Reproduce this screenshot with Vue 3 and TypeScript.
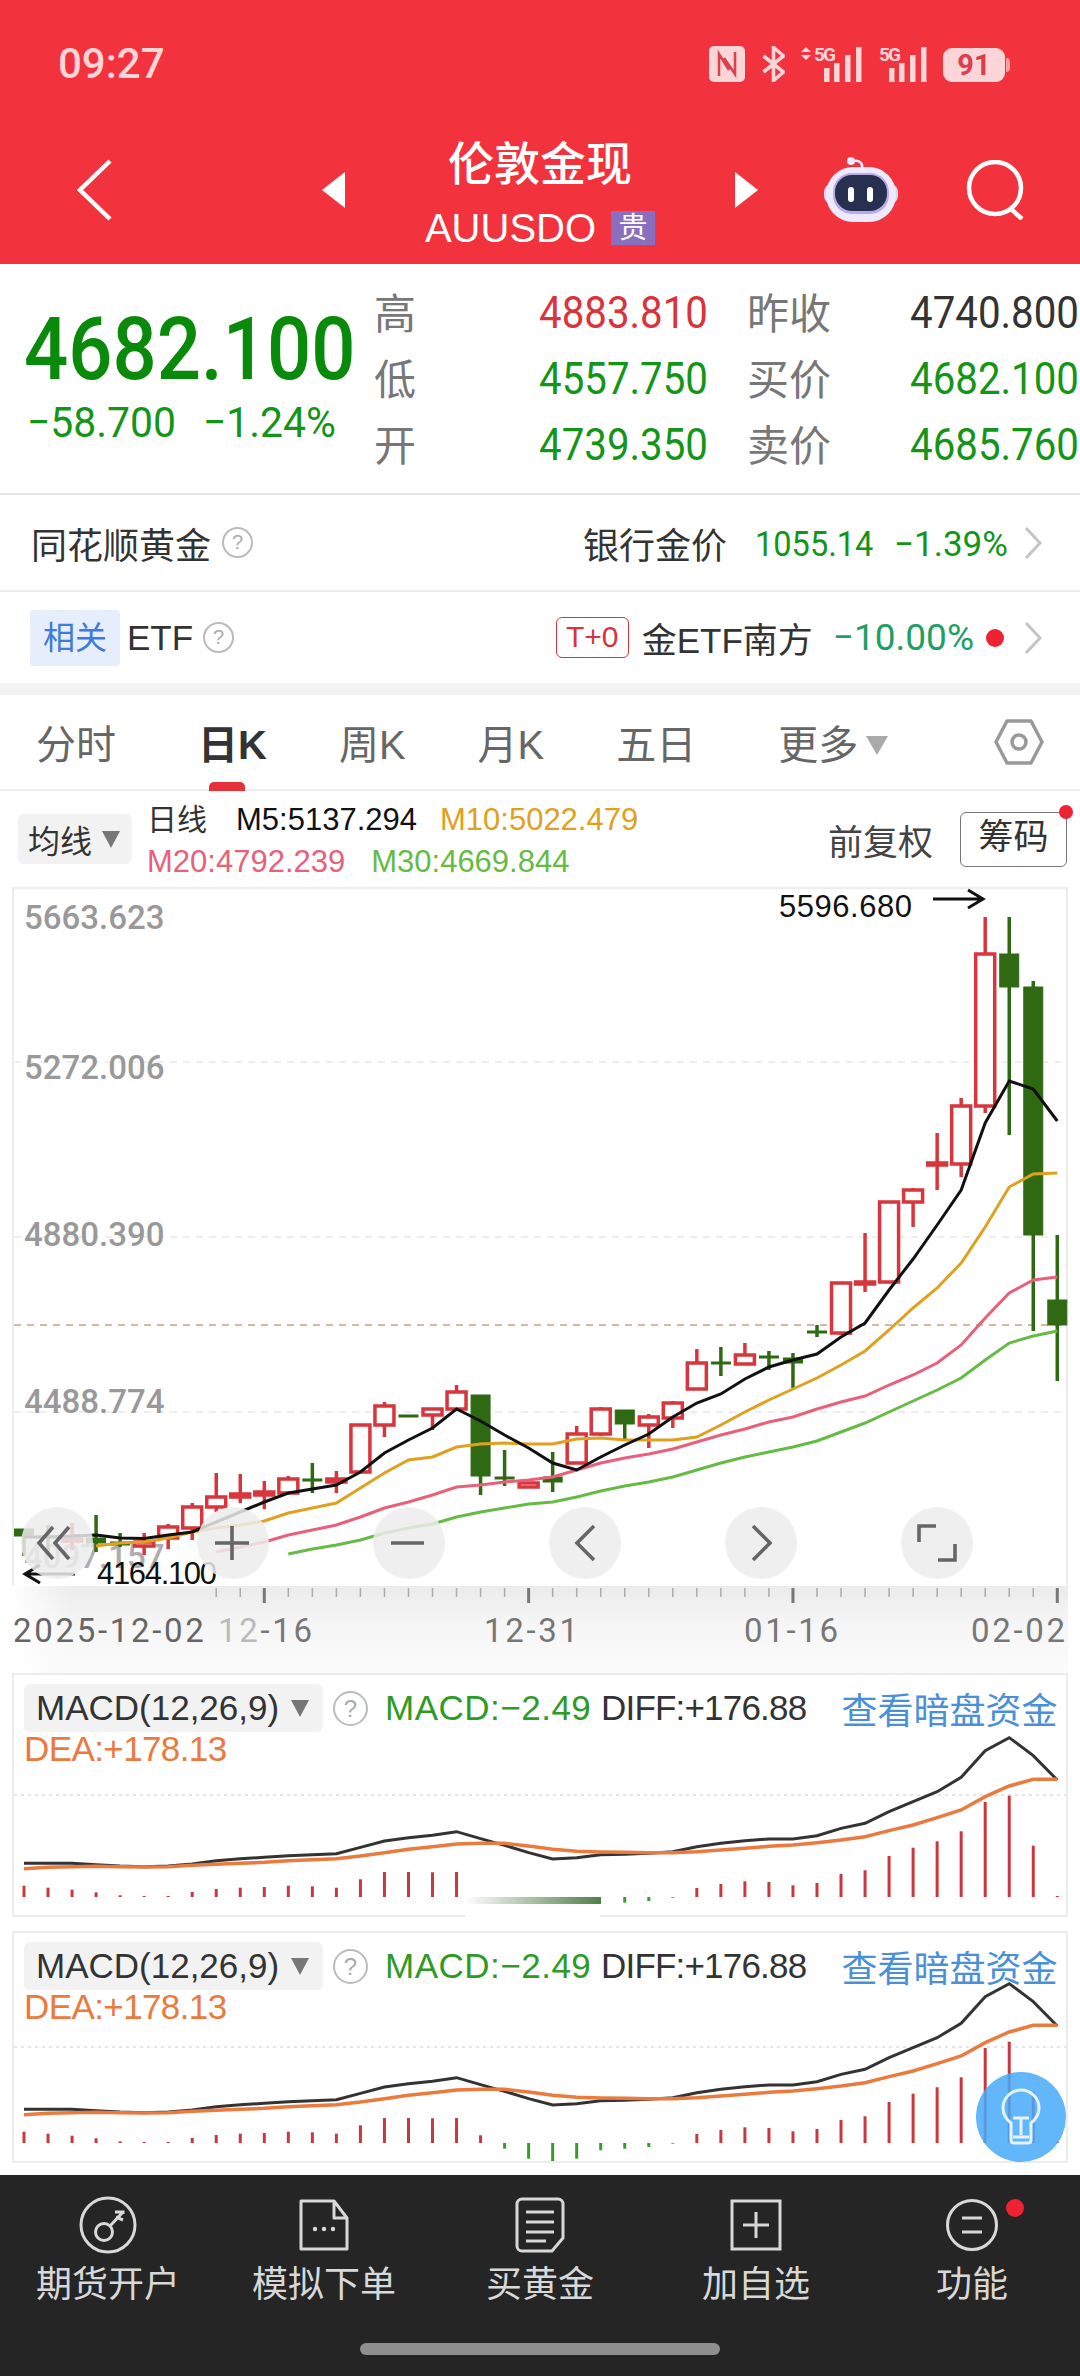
<template>
  <div class="page">
    <!-- 顶部红色区域 -->
    <header class="top">
      <div class="status">
        <span class="time">09:27</span>
        <div class="status-icons">
          <svg width="36" height="36" viewBox="0 0 36 36">
            <rect width="36" height="36" rx="5" fill="#fbd5d8" />
            <path d="M10 30V8l10 16M26 6v22L15 12" fill="none" stroke="#d9434e" stroke-width="2.6" />
          </svg>
          <svg width="23" height="36" viewBox="0 0 23 36">
            <path d="M1.5 10l20 16-10 8.500V1.500l10 8.500-20 16" fill="none" stroke="#fbd5d8" stroke-width="3.6" />
          </svg>
          <svg width="61" height="42" viewBox="0 -6 61 42">
            <path d="M0 6l5-5 5 5zM0 9l5 5 5-5z" fill="#fbd5d8" />
            <text class="g5" x="13" y="15" textLength="22">5G</text>
            <rect x="23" y="22" width="5.500" height="14" fill="#fbd5d8" />
            <rect x="33" y="17" width="5.500" height="19" fill="#fbd5d8" />
            <rect x="44" y="9" width="5.500" height="27" fill="#fbd5d8" />
            <rect x="55" y="1" width="5.500" height="35" fill="#fbd5d8" />
          </svg>
          <svg width="48" height="42" viewBox="0 -6 48 42">
            <text class="g5" x="0" y="15" textLength="22">5G</text>
            <rect x="10" y="22" width="5.500" height="14" fill="#fbd5d8" />
            <rect x="20" y="17" width="5.500" height="19" fill="#fbd5d8" />
            <rect x="31" y="9" width="5.500" height="27" fill="#fbd5d8" />
            <rect x="42" y="1" width="5.500" height="35" fill="#fbd5d8" />
          </svg>
          <div class="battery"><span>91</span></div>
        </div>
      </div>
      <div class="nav">
        <svg class="back" width="35" height="62" viewBox="0 0 35 62">
          <path d="M33 2L3 31l30 29" fill="none" stroke="#fff" stroke-width="4.500" />
        </svg>
        <svg class="tri-left" width="23" height="36" viewBox="0 0 23 36"><path d="M23 0v36L0 18z" fill="#fff" /></svg>
        <div class="nav-title">
          <div class="title">伦敦金现</div>
          <div class="sub">AUUSDO<span class="badge">贵</span></div>
        </div>
        <svg width="23" height="36" viewBox="0 0 23 36"><path d="M0 0v36l23-18z" fill="#fff" /></svg>
        <svg class="robot" width="72" height="66" viewBox="0 0 72 66">
          <path d="M37 11c1-5-3-8-8-7" fill="none" stroke="#f0ecfb" stroke-width="2.600" />
          <circle cx="26" cy="4" r="4" fill="#f0ecfb" />
          <rect x="-1" y="27" width="74" height="20" rx="8" fill="#d7d5f2" />
          <rect x="1" y="10" width="70" height="55" rx="27" fill="#eceafb" />
          <rect x="8" y="16" width="56" height="41" rx="19" fill="#b9a9ef" />
          <rect x="10" y="18" width="52" height="36" rx="17" fill="#28304f" />
          <rect x="23" y="30" width="6" height="15" rx="3" fill="#fff" />
          <rect x="42" y="30" width="6" height="15" rx="3" fill="#fff" />
        </svg>
        <svg class="search" width="60" height="60" viewBox="0 0 60 60">
          <circle cx="29" cy="28" r="26" fill="none" stroke="#fff" stroke-width="4.500" />
          <path d="M44 48l12 11" stroke="#fff" stroke-width="4.500" />
        </svg>
      </div>
    </header>

    <!-- 行情 -->
    <section class="quote">
      <div class="quote-main">
        <div class="price"><span class="squeeze-big">4682.100</span></div>
        <div class="change"><span>−58.700</span><span>−1.24%</span></div>
      </div>
      <div class="quote-grid">
        <template v-for="row in quoteRows" :key="row.l1">
          <span class="q-label">{{ row.l1 }}</span>
          <span class="q-val" :class="row.c1">{{ row.v1 }}</span>
          <span></span>
          <span class="q-label">{{ row.l2 }}</span>
          <span class="q-val" :class="row.c2">{{ row.v2 }}</span>
        </template>
      </div>
    </section>

    <div class="info-row first">
      <span class="info-name">同花顺黄金</span>
      <i class="help">?</i>
      <span class="info-right">银行金价</span>
      <span class="info-num">1055.14</span>
      <span class="info-num pct">−1.39%</span>
      <svg class="chev" width="18" height="32" viewBox="0 0 18 32"><path d="M2 1l14 15L2 31" fill="none" stroke="#c4c4c4" stroke-width="3" /></svg>
    </div>
    <div class="info-row second">
      <span class="chip-blue">相关</span>
      <span class="info-etf">ETF</span>
      <i class="help small-gap">?</i>
      <span class="t0">T+0</span>
      <span class="etf-name">金ETF南方</span>
      <span class="etf-pct">−10.00%</span>
      <i class="dot"></i>
      <svg class="chev" width="18" height="32" viewBox="0 0 18 32"><path d="M2 1l14 15L2 31" fill="none" stroke="#c4c4c4" stroke-width="3" /></svg>
    </div>

    <!-- 周期切换 -->
    <nav class="tabs">
      <span class="tab">分时</span>
      <span class="tab active">日K</span>
      <span class="tab">周K</span>
      <span class="tab">月K</span>
      <span class="tab">五日</span>
      <span class="tab more">更多<i class="tri gray"></i></span>
      <svg class="gear" width="50" height="46" viewBox="0 0 50 46">
        <path d="M13 2h24l11 21-11 21H13L2 23z" fill="none" stroke="#999" stroke-width="3.500" stroke-linejoin="round" />
        <circle cx="25" cy="23" r="7" fill="none" stroke="#999" stroke-width="3.500" />
      </svg>
    </nav>

    <div class="ma-row">
      <span class="ma-chip">均线<i class="tri dark"></i></span>
      <div class="legend">
        <div class="legend-line">
          <span class="day">日线</span>
          <span class="m5">M5:5137.294</span>
          <span class="m10">M10:5022.479</span>
        </div>
        <div class="legend-line">
          <span class="m20">M20:4792.239</span>
          <span class="m30">M30:4669.844</span>
        </div>
      </div>
      <span class="adjust">前复权</span>
      <span class="chips-btn">筹码<i class="chips-dot"></i></span>
    </div>

    <!-- K线图 -->
    <div class="kline">
      <svg width="1052" height="697" viewBox="14 889 1052 697" class="kline-svg">
        <line v-for="y in gridY" :key="y" x1="14" x2="1066" :y1="y" :y2="y" class="grid" />
        <line x1="14" x2="1066" y1="1325" y2="1325" class="last-line" />
        <text v-for="t in priceLabels" :key="t.text" x="24" :y="t.y" class="axis-price" :class="{ faded: t.faded }">{{ t.text }}</text>

        <g v-for="(c, i) in candles" :key="i" :class="c[0] === 'r' ? 'up' : 'down'">
          <line :x1="cx(i)" :x2="cx(i)" :y1="c[1]" :y2="c[3]" class="wick" />
          <line :x1="cx(i)" :x2="cx(i)" :y1="c[4]" :y2="c[2]" class="wick" />
          <rect :x="cx(i) - 9.5" :y="c[3]" width="19" :height="c[4] - c[3]" class="body" />
        </g>

        <polyline :points="ma30" class="ma c30" />
        <polyline :points="ma20" class="ma c20" />
        <polyline :points="ma10" class="ma c10" />
        <polyline :points="ma5" class="ma c5" />

        <text x="779" y="917" textLength="133" class="mark">5596.680</text>
        <path d="M933 899h50M968 890l15 9-15 9" class="mark-arrow" />
        <text x="97" y="1584" textLength="120" class="mark">4164.100</text>
        <path d="M75 1574H25M40 1565l-15 9 15 9" class="mark-arrow" />
      </svg>
      <div class="chart-tools">
        <button v-for="b in toolButtons" :key="b" class="tool">
          <svg width="72" height="72" viewBox="0 0 72 72"><path :d="b" fill="none" stroke="#666" stroke-width="3.600" /></svg>
        </button>
      </div>
    </div>

    <div class="axis">
      <svg width="1056" height="87" viewBox="12 1586 1056 87">
        <line v-for="t in ticks" :key="t.x" :x1="t.x" :x2="t.x" y1="1588" :y2="t.major ? 1603 : 1597" :class="t.major ? 'tick-major' : 'tick'" />
        <text x="13" y="1642" class="date dark-date">2025-12-02</text>
        <text x="218" y="1642" class="date"><tspan class="light-date">12</tspan>-16</text>
        <text x="484" y="1642" class="date">12-31</text>
        <text x="744" y="1642" class="date">01-16</text>
        <text x="971" y="1642" class="date">02-02</text>
      </svg>
    </div>

    <!-- MACD -->
    <div v-for="(p, n) in panels" :key="n" class="macd" :class="'macd-' + n">
      <svg class="macd-svg" width="1052" :height="p.h" :viewBox="'14 ' + p.top + ' 1052 ' + p.h">
        <line x1="14" x2="1066" :y1="p.grid" :y2="p.grid" class="dotted" />
        <template v-for="(h, i) in macdBars" :key="i">
          <line v-if="!p.hide.includes(i)" :x1="cx(i)" :x2="cx(i)" y1="1897" :y2="1897 - h" :class="h >= 0 ? 'bar-up' : 'bar-down'" />
        </template>
        <polyline :points="diffLine" class="diff" />
        <polyline :points="deaLine" class="dea" />
        <template v-if="n === 0">
          <defs>
            <linearGradient id="fade">
              <stop offset="0" stop-color="#fff" />
              <stop offset="1" stop-color="#4f7f46" />
            </linearGradient>
          </defs>
          <rect x="465" y="1897" width="136" height="7" fill="url(#fade)" />
        </template>
      </svg>
      <div class="macd-head">
        <span class="macd-chip">MACD(12,26,9)<i class="tri dark"></i></span>
        <i class="help big">?</i>
        <span class="macd-val">MACD:−2.49</span>
        <span class="diff-val">DIFF:+176.88</span>
        <span class="dark-link">查看暗盘资金</span>
      </div>
      <div class="dea-val">DEA:+178.13</div>
      <i v-if="n === 0" class="blot"></i>
      <div v-if="n === 1" class="fab">
        <svg width="46" height="60" viewBox="0 0 46 60">
          <path d="M13 36C8 32 5 27 5 21a18 18 0 0 1 36 0c0 6-3 11-8 15v17q0 3-3 3H16q-3 0-3-3z" fill="none" stroke="#e4f3ff" stroke-width="3" />
          <path d="M15 31h16M23 31v17M15 50h16" fill="none" stroke="#e4f3ff" stroke-width="3" />
        </svg>
      </div>
    </div>

    <!-- 底部功能栏 -->
    <footer class="bottom">
      <div class="bottom-items">
        <div class="bottom-item">
          <svg width="60" height="60" viewBox="0 0 60 60">
            <circle cx="30" cy="30" r="27" fill="none" stroke="#d8d8d8" stroke-width="3" />
            <circle cx="26" cy="37" r="8.500" fill="none" stroke="#d8d8d8" stroke-width="3" />
            <path d="M32 31l13-14M37 17h8v2M38 22l7 3" fill="none" stroke="#d8d8d8" stroke-width="3" />
          </svg>
          <span>期货开户</span>
        </div>
        <div class="bottom-item">
          <svg width="60" height="60" viewBox="0 0 60 60">
            <path d="M7 6h33l13 17v31H7z M40 6v17h13" fill="none" stroke="#d8d8d8" stroke-width="3" stroke-linejoin="round" />
            <circle cx="21" cy="34" r="2.200" fill="#d8d8d8" /><circle cx="30" cy="34" r="2.200" fill="#d8d8d8" /><circle cx="39" cy="34" r="2.200" fill="#d8d8d8" />
          </svg>
          <span>模拟下单</span>
        </div>
        <div class="bottom-item">
          <svg width="60" height="60" viewBox="0 0 60 60">
            <path d="M12 4h36a5 5 0 0 1 5 5v34L42 56H12a5 5 0 0 1-5-5V9a5 5 0 0 1 5-5z" fill="none" stroke="#d8d8d8" stroke-width="3" />
            <path d="M16 17h28M16 27h28M16 37h28M16 46h20" stroke="#d8d8d8" stroke-width="3.200" />
          </svg>
          <span>买黄金</span>
        </div>
        <div class="bottom-item">
          <svg width="60" height="60" viewBox="0 0 60 60">
            <rect x="6" y="6" width="48" height="48" fill="none" stroke="#d8d8d8" stroke-width="3" />
            <path d="M30 17v26M17 30h26" stroke="#d8d8d8" stroke-width="3" />
          </svg>
          <span>加自选</span>
        </div>
        <div class="bottom-item func">
          <svg width="60" height="60" viewBox="0 0 60 60">
            <circle cx="30" cy="30" r="24.500" fill="none" stroke="#d8d8d8" stroke-width="3" />
            <path d="M20 23h20M20 37h20" stroke="#d8d8d8" stroke-width="3" />
          </svg>
          <span>功能</span>
          <i class="func-dot"></i>
        </div>
      </div>
      <div class="home-bar"></div>
    </footer>
  </div>
</template>

<script setup lang="ts">
// 每根K线: 涨跌, 最高, 最低, 实体上沿, 实体下沿 (都是画面上的 y)
type Candle = ['r' | 'g', number, number, number, number]

const cx = (i: number) => 24 + i * 24.03

const quoteRows = [
  { l1: '高', v1: '4883.810', c1: 'red', l2: '昨收', v2: '4740.800', c2: 'black' },
  { l1: '低', v1: '4557.750', c1: 'green', l2: '买价', v2: '4682.100', c2: 'green' },
  { l1: '开', v1: '4739.350', c1: 'green', l2: '卖价', v2: '4685.760', c2: 'green' }
]

const gridY = [1062, 1237, 1412]
const priceLabels = [
  { text: '5663.623', y: 929 },
  { text: '5272.006', y: 1079 },
  { text: '4880.390', y: 1246 },
  { text: '4488.774', y: 1413 },
  { text: '4097.157', y: 1568, faded: true }
]

const candles: Candle[] = [
  ['g', 1529, 1556, 1529, 1536],
  ['g', 1525, 1555, 1536, 1538],
  ['r', 1523, 1550, 1539, 1541],
  ['g', 1515, 1552, 1538, 1543],
  ['g', 1533, 1547, 1542, 1545],
  ['r', 1533, 1555, 1542, 1546],
  ['r', 1524, 1549, 1527, 1538],
  ['r', 1503, 1540, 1507, 1528],
  ['r', 1473, 1512, 1497, 1507],
  ['r', 1474, 1503, 1494, 1497],
  ['r', 1481, 1509, 1492, 1495],
  ['r', 1476, 1493, 1479, 1493],
  ['g', 1463, 1493, 1479, 1481],
  ['r', 1471, 1493, 1479, 1482],
  ['r', 1425, 1472, 1425, 1472],
  ['r', 1402, 1437, 1406, 1425],
  ['g', 1415, 1417, 1415, 1417],
  ['r', 1408, 1430, 1409, 1415],
  ['r', 1385, 1410, 1392, 1409],
  ['g', 1395, 1495, 1395, 1476],
  ['g', 1450, 1486, 1477, 1479],
  ['r', 1483, 1487, 1483, 1487],
  ['g', 1452, 1492, 1477, 1482],
  ['r', 1426, 1463, 1434, 1463],
  ['r', 1407, 1436, 1409, 1434],
  ['g', 1410, 1440, 1410, 1424],
  ['r', 1414, 1448, 1417, 1425],
  ['r', 1401, 1428, 1403, 1418],
  ['r', 1349, 1390, 1363, 1389],
  ['g', 1347, 1376, 1362, 1364],
  ['r', 1343, 1364, 1355, 1364],
  ['g', 1351, 1370, 1356, 1358],
  ['g', 1353, 1388, 1358, 1363],
  ['g', 1325, 1337, 1331, 1333],
  ['r', 1283, 1335, 1283, 1333],
  ['r', 1233, 1292, 1282, 1284],
  ['r', 1202, 1283, 1202, 1282],
  ['r', 1188, 1227, 1190, 1202],
  ['r', 1133, 1190, 1163, 1165],
  ['r', 1098, 1177, 1106, 1164],
  ['r', 917, 1113, 954, 1106],
  ['g', 917, 1135, 954, 987],
  ['g', 981, 1331, 987, 1235],
  ['g', 1235, 1381, 1300, 1325]
]

const toPoints = (start: number, ys: number[]) =>
  ys.map((y, i) => `${cx(start + i)},${y}`).join(' ')

const ma5 = toPoints(0, [
  1537, 1537, 1536, 1535, 1538, 1538.5, 1535, 1532, 1522, 1512, 1502, 1493, 1489, 1485, 1472, 1453, 1440,
  1428, 1409, 1421, 1435, 1448, 1463, 1470, 1457, 1445, 1434, 1417, 1403, 1394, 1379, 1367, 1360, 1354,
  1337, 1323, 1290, 1259, 1225, 1190, 1123, 1081, 1089, 1121
])
const ma10 = toPoints(3, [
  1546, 1543, 1542, 1538, 1532, 1528, 1525, 1521, 1513, 1508, 1503, 1488, 1473, 1460, 1457, 1447, 1444,
  1443, 1444, 1444, 1439, 1438, 1440, 1440, 1440, 1437, 1425, 1412, 1400, 1389, 1378, 1365, 1351, 1330,
  1308, 1288, 1263, 1227, 1187, 1174, 1173
])
const ma20 = toPoints(8, [
  1552, 1547, 1542, 1535, 1530, 1525, 1517, 1508, 1502, 1495, 1487, 1485, 1482, 1480, 1477, 1470, 1463,
  1458, 1454, 1449, 1442, 1435, 1429, 1422, 1417, 1409, 1402, 1396, 1385, 1375, 1363, 1345, 1318, 1293,
  1280, 1277
])
const ma30 = toPoints(11, [
  1554, 1549, 1545, 1540, 1533, 1528, 1524, 1517, 1512, 1508, 1504, 1502, 1497, 1491, 1486, 1482, 1477,
  1470, 1463, 1457, 1452, 1447, 1441, 1432, 1423, 1412, 1401, 1390, 1378, 1360, 1343, 1336, 1331
])

const toolButtons = [
  'M32 20L18 36l14 16M48 20L34 36l14 16',
  'M18 36h34M35 19v34',
  'M18 36h33',
  'M45 19L28 36l17 17',
  'M28 19l17 17-17 17',
  'M18 35V19h17M54 37v16H37'
]

const ticks = Array.from({ length: 36 }, (_, k) => {
  const i = k + 8
  return { x: cx(i), major: [10, 21, 32, 43].includes(i) }
})

// MACD 柱子高度，正数向上
const macdBars = [
  11.3, 9.3, 7.3, 4.7, 1.7, 1, 1, 5, 8, 9.3, 10, 11.3, 10.7, 9.3, 17.7, 25, 25, 24.7, 25, 7.7, -5.7, -15.7,
  -20, -15.7, -7.3, -5.7, -4, -0.7, 9, 13, 15.7, 15, 11.7, 14, 23, 26.7, 41, 49.3, 55.7, 65.7, 95, 101.3,
  51.3, 1
]
const macdY = (v: number) => 1660 + v / 3
const diffLine = toPoints(0, [
  610, 610, 610, 614, 618, 620, 618, 612, 602, 596, 592, 587, 584, 581, 562, 543, 533, 526, 515, 536, 556,
  578, 597, 593, 584, 583, 580, 575, 560, 550, 542, 537, 537, 527, 505, 490, 455, 425, 395, 352, 272, 233,
  287, 360
].map(macdY))
const deaLine = toPoints(0, [
  626, 622, 620, 619, 620, 621, 620, 616, 613, 610, 607, 602, 599, 596, 588, 578, 568, 560, 552, 550, 550,
  558, 568, 574, 576, 577, 578, 578, 575, 570, 565, 559, 555, 548, 540, 530, 512, 495, 473, 450, 410, 378,
  358, 358
].map(macdY))

const panels = [
  { top: 1675, h: 240, grid: 1795, hide: [19, 20, 21, 22, 23, 24] },
  { top: 1687, h: 228, grid: 1801, hide: [] as number[] }
]
</script>

<style>
html,
body {
  margin: 0;
  background: #fff;
}
</style>

<style scoped>
.page {
  width: 1080px;
  height: 2376px;
  overflow: hidden;
  background: #fff;
  display: flex;
  flex-direction: column;
  font-family: 'Liberation Sans', 'Noto Sans CJK SC', sans-serif;
  color: #333;
}

i {
  font-style: normal;
}

.top {
  height: 264px;
  background: #f2323c;
  color: #fff;
  flex: none;
}

.status {
  height: 126px;
  display: flex;
  align-items: center;
  padding: 0 75px 0 58px;
  color: #fbd5d8;
}

.time {
  font-family: Roboto, sans-serif;
  font-size: 42px;
  font-weight: 500;
}

.status-icons {
  margin-left: auto;
  margin-top: -4px;
  display: flex;
  align-items: flex-end;
  gap: 16.5px;
}

.g5 {
  font-family: Roboto, sans-serif;
  font-size: 19px;
  font-weight: 700;
  fill: #fbd5d8;
}

.battery {
  width: 62px;
  height: 34px;
  border-radius: 9px;
  background: #fbd5d8;
  color: #d8404e;
  font-family: Roboto, sans-serif;
  font-size: 29px;
  font-weight: 700;
  display: flex;
  align-items: center;
  justify-content: center;
  position: relative;
}

.battery::after {
  content: '';
  position: absolute;
  right: -5px;
  top: 10px;
  width: 4px;
  height: 14px;
  border-radius: 0 4px 4px 0;
  background: #fbd5d8aa;
}

.nav {
  height: 138px;
  display: flex;
  align-items: center;
  padding: 0 0 10px 77px;
  box-sizing: border-box;
}

.tri-left {
  margin-left: 210px;
}

.nav-title {
  width: 390px;
  text-align: center;
}

.title {
  font-size: 46px;
  font-weight: 500;
  line-height: 76px;
  height: 76px;
}

.sub {
  font-size: 40px;
  line-height: 52px;
  height: 52px;
  display: flex;
  justify-content: center;
  align-items: center;
}

.badge {
  margin-left: 15px;
  width: 44px;
  height: 34px;
  background: #8a6fc0;
  color: #fff;
  font-size: 29px;
  line-height: 34px;
}

.robot {
  margin-left: 67px;
  overflow: visible;
}

.search {
  margin-left: 69px;
}

.quote {
  height: 231px;
  flex: none;
  box-sizing: border-box;
  border-bottom: 2px solid #e6e6e6;
  display: flex;
}

.quote-main {
  width: 374px;
  flex: none;
  padding: 41px 0 0 24px;
  box-sizing: border-box;
  font-family: Roboto, sans-serif;
  color: #0a8a0a;
}

.price {
  height: 88px;
  line-height: 88px;
  font-size: 88px;
  font-weight: 500;
  white-space: nowrap;
}

.squeeze-big {
  display: inline-block;
  transform: scaleX(0.885);
  transform-origin: left center;
}

.change {
  margin: 9px 0 0 3px;
  font-size: 43px;
  line-height: 40px;
  display: flex;
  color: #14951a;
  white-space: nowrap;
}

.change span {
  width: 176px;
  flex: none;
  display: inline-block;
  transform: scaleX(0.95);
  transform-origin: left center;
}

.change span + span {
  width: 140px;
}

.quote-grid {
  display: grid;
  grid-template-columns: 165px 167px 41px 163px 167px;
  grid-auto-rows: 66px;
  padding-top: 16px;
  align-items: center;
}

.q-label {
  font-size: 42px;
  color: #777;
  margin-bottom: 6px;
}

.q-val {
  font-family: Roboto, sans-serif;
  font-size: 44px;
  white-space: nowrap;
  display: inline-block;
  transform: scaleX(0.915);
  transform-origin: left center;
}

.q-val.red {
  color: #d8343c;
}

.q-val.green {
  color: #14951a;
}

.q-val.black {
  color: #333;
}

.info-row {
  display: flex;
  align-items: center;
  box-sizing: border-box;
  flex: none;
}

.info-row.first {
  height: 97px;
  padding: 0 38px 0 31px;
  border-bottom: 2px solid #ececec;
}

.info-row.second {
  height: 103px;
  padding: 0 38px 0 30px;
  border-bottom: 12px solid #f3f3f3;
}

.info-name {
  font-size: 36px;
}

.help {
  width: 31px;
  height: 31px;
  box-sizing: border-box;
  border: 2px solid #bbb;
  border-radius: 50%;
  color: #aaa;
  font-size: 20px;
  line-height: 27px;
  text-align: center;
  margin-left: 11px;
  flex: none;
}

.help.big {
  width: 35px;
  height: 35px;
  font-size: 24px;
  line-height: 31px;
  margin-left: 10px;
}

.info-right {
  margin-left: auto;
  font-size: 36px;
}

.info-num {
  font-family: Roboto, sans-serif;
  font-size: 35px;
  color: #14951a;
  margin: 4px 0 0 28px;
  width: 118px;
  display: inline-block;
  white-space: nowrap;
  transform: scaleX(0.93);
  transform-origin: left center;
}

.info-num.pct {
  margin-left: 21px;
  width: 112px;
  transform: none;
}

.chev {
  margin-left: 18px;
  flex: none;
}

.chip-blue {
  width: 90px;
  height: 56px;
  background: #e6eefb;
  color: #3f7bd8;
  font-size: 32px;
  line-height: 56px;
  text-align: center;
  border-radius: 4px;
}

.info-etf {
  margin-left: 7px;
  font-size: 35px;
}

.help.small-gap {
  margin-left: 10px;
}

.t0 {
  margin-left: auto;
  width: 73px;
  height: 41px;
  box-sizing: border-box;
  border: 1.5px solid #d8343c;
  border-radius: 6px;
  color: #d8343c;
  font-size: 30px;
  line-height: 38px;
  text-align: center;
}

.etf-name {
  margin-left: 13px;
  font-size: 35px;
}

.etf-pct {
  margin-left: 20px;
  font-family: Roboto, sans-serif;
  font-size: 37px;
  color: #1ea065;
}

.dot {
  margin-left: 12px;
  width: 18px;
  height: 18px;
  border-radius: 50%;
  background: #ee2233;
}

.second .chev {
  margin-left: 20px;
}

.tabs {
  height: 96px;
  flex: none;
  box-sizing: border-box;
  border-bottom: 2px solid #ececec;
  display: flex;
  align-items: center;
  gap: 72px;
  padding: 6px 36px 0 36px;
}

.tab {
  font-size: 40px;
  line-height: 48px;
  color: #666;
  position: relative;
  white-space: nowrap;
}

.tab.active {
  margin-left: 10px;
  color: #333;
  font-weight: 700;
}

.tab.active::after {
  content: '';
  position: absolute;
  left: 11px;
  bottom: -22px;
  width: 36px;
  height: 9px;
  border-radius: 5px 5px 0 0;
  background: #e5323a;
}

.tab.more {
  margin-left: 10px;
  display: flex;
  align-items: center;
}

.tri {
  display: inline-block;
  width: 0;
  height: 0;
  border-left: 9px solid transparent;
  border-right: 9px solid transparent;
  border-top: 17px solid #777;
}

.tri.gray {
  border-top-color: #aaa;
  margin-left: 8px;
  border-left-width: 11px;
  border-right-width: 11px;
  border-top-width: 19px;
}

.gear {
  margin-left: auto;
  margin-top: -6px;
  flex: none;
}

.ma-row {
  height: 96px;
  flex: none;
  display: flex;
  align-items: center;
  padding: 0 13px 0 18px;
  box-sizing: border-box;
}

.ma-chip {
  width: 114px;
  height: 50px;
  background: #f2f2f2;
  border-radius: 6px;
  box-sizing: border-box;
  padding-left: 10px;
  display: flex;
  align-items: center;
  gap: 10px;
  font-size: 32px;
}

.legend {
  margin-left: 15px;
  margin-top: 4px;
  font-size: 31px;
}

.legend-line {
  display: flex;
  gap: 26px;
  line-height: 42px;
  height: 42px;
  white-space: nowrap;
}

.day {
  font-size: 30px;
  color: #333;
}

.m5 {
  color: #111;
  margin-left: 3px;
}

.m10 {
  color: #e0a020;
  margin-left: -3px;
}

.m20 {
  color: #e8607a;
}

.m30 {
  color: #66bb44;
}

.adjust {
  margin-left: auto;
  font-size: 35px;
  color: #444;
}

.chips-btn {
  margin-left: 27px;
  width: 107px;
  height: 55px;
  box-sizing: border-box;
  border: 1.5px solid #777;
  border-radius: 6px;
  font-size: 35px;
  line-height: 48px;
  text-align: center;
  position: relative;
}

.chips-dot {
  position: absolute;
  right: -7px;
  top: -8px;
  width: 14px;
  height: 14px;
  border-radius: 50%;
  background: #ee2233;
}

.kline {
  margin: 0 12px;
  width: 1056px;
  height: 699px;
  box-sizing: border-box;
  border: 2px solid #ececec;
  border-bottom: 0;
  position: relative;
  flex: none;
}

.kline-svg {
  display: block;
  overflow: visible;
}

.grid {
  stroke: #dedede;
  stroke-width: 1.2;
  stroke-dasharray: 7 6;
}

.last-line {
  stroke: #c4a585;
  stroke-width: 1.5;
  stroke-dasharray: 7 6;
}

.axis-price {
  font-family: Roboto, sans-serif;
  font-size: 33px;
  font-weight: 500;
  fill: #999;
}

.axis-price.faded {
  opacity: 0.8;
}

.wick {
  stroke-width: 3.5;
}

.up .wick {
  stroke: #d8353d;
}

.down .wick {
  stroke: #2f6a12;
}

.up .body {
  fill: #fff;
  stroke: #d8353d;
  stroke-width: 3.5;
}

.down .body {
  fill: #2f6a12;
  stroke: #2f6a12;
  stroke-width: 1;
}

.ma {
  fill: none;
  stroke-width: 3;
}

.c5 {
  stroke: #111;
}

.c10 {
  stroke: #e0a020;
}

.c20 {
  stroke: #e8607a;
}

.c30 {
  stroke: #66bb44;
}

.mark {
  font-family: 'Liberation Sans', sans-serif;
  font-size: 31px;
  fill: #111;
}

.mark-arrow {
  fill: none;
  stroke: #111;
  stroke-width: 3;
}

.chart-tools {
  position: absolute;
  left: 7px;
  top: 618px;
  display: flex;
  gap: 104px;
}

.tool {
  width: 72px;
  height: 72px;
  padding: 0;
  border: 0;
  border-radius: 50%;
  background: rgba(236, 236, 236, 0.85);
}

.tool svg {
  display: block;
}

.axis {
  margin-left: 12px;
  width: 1056px;
  height: 87px;
  flex: none;
  background: linear-gradient(to right, #fff, transparent 60px),
    linear-gradient(to bottom, #ebebeb, #f6f6f6 45%, #fbfbfb);
}

.axis svg {
  display: block;
}

.tick {
  stroke: #aaa;
  stroke-width: 1.5;
}

.tick-major {
  stroke: #777;
  stroke-width: 3;
}

.date {
  font-family: Roboto, sans-serif;
  font-size: 33px;
  letter-spacing: 2.7px;
  fill: #777;
}

.dark-date {
  fill: #666;
}

.light-date {
  fill: #bbb;
}

.macd {
  margin-left: 12px;
  width: 1056px;
  height: 244px;
  flex: none;
  box-sizing: border-box;
  border: 2px solid #ececec;
  position: relative;
}

.macd-1 {
  margin-top: 14px;
  height: 232px;
}

.macd-svg {
  position: absolute;
  left: 0;
  top: 0;
  display: block;
}

.dotted {
  stroke: #ddd;
  stroke-width: 1.5;
  stroke-dasharray: 3 4;
}

.bar-up {
  stroke: #c8383e;
  stroke-width: 3;
}

.bar-down {
  stroke: #3a9a30;
  stroke-width: 3;
}

.diff {
  fill: none;
  stroke: #333;
  stroke-width: 3;
}

.dea {
  fill: none;
  stroke: #ea7a3e;
  stroke-width: 3.5;
}

.macd-head {
  position: relative;
  display: flex;
  align-items: center;
  margin: 9px 0 0 10px;
  height: 48px;
  white-space: nowrap;
  font-size: 35px;
}

.macd-chip {
  width: 299px;
  height: 48px;
  box-sizing: border-box;
  padding-left: 12px;
  background: #f2f2f2;
  border-radius: 6px;
  display: flex;
  align-items: center;
  gap: 12px;
}

.macd-val {
  margin-left: 17px;
  width: 216px;
  color: #2f9a25;
  letter-spacing: 0.5px;
}

.diff-val {
  color: #333;
  letter-spacing: -0.8px;
}

.dark-link {
  margin-left: 35px;
  font-size: 36px;
  color: #4a90d9;
}

.dea-val {
  position: relative;
  margin: 2px 0 0 10px;
  font-size: 35px;
  line-height: 30px;
  letter-spacing: -0.6px;
  color: #ea7a3e;
}

.blot {
  position: absolute;
  left: 451px;
  bottom: -3px;
  width: 135px;
  height: 5px;
  background: #fff;
}

.fab {
  position: absolute;
  right: 0;
  top: 139px;
  width: 90px;
  height: 90px;
  border-radius: 50%;
  background: rgba(70, 170, 250, 0.85);
  display: flex;
  align-items: center;
  justify-content: center;
}

.bottom {
  margin-top: 12px;
  flex: 1;
  background: #252525;
  color: #d8d8d8;
  position: relative;
}

.bottom-items {
  display: grid;
  grid-template-columns: repeat(5, 216px);
}

.bottom-item {
  display: flex;
  flex-direction: column;
  align-items: center;
  padding-top: 20px;
  font-size: 36px;
  line-height: 48px;
  position: relative;
}

.bottom-item span {
  margin-top: 6px;
}

.func-dot {
  position: absolute;
  left: 142px;
  top: 24px;
  width: 18px;
  height: 18px;
  border-radius: 50%;
  background: #ee2233;
}

.home-bar {
  position: absolute;
  left: 360px;
  top: 168px;
  width: 360px;
  height: 12px;
  border-radius: 6px;
  background: #8e8e8e;
}
</style>
